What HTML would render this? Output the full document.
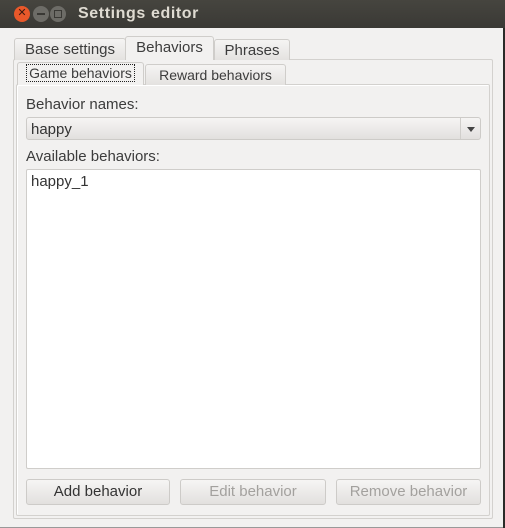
<!DOCTYPE html>
<html><head><style>
*{box-sizing:border-box;margin:0;padding:0}
body{width:505px;height:528px;background:#2b2b28;font-family:"Liberation Sans",sans-serif;font-size:15px;color:#3c3c3c;position:relative;overflow:hidden}
.a{position:absolute}
.title{left:0;top:0;width:505px;height:28px;background:linear-gradient(#46453f,#3a3935);color:#dfdbd2;font-weight:bold;font-size:16px;letter-spacing:0.6px}
.win{left:0;top:28px;width:503px;height:500px;background:#f2f1f0;border-bottom:1px solid #999}
.circ{width:16px;height:16px;border-radius:50%;top:6px}
.tab{border:1px solid #cfcdca;border-bottom:none;border-radius:3px 3px 0 0;background:linear-gradient(#f5f4f3,#e4e2e0);text-align:center;font-size:15px}
.sel{background:#f2f1f0}
.pane{border:1px solid #d3d1ce;border-radius:2px}
.btn{border:1px solid #cdcbc8;border-radius:3px;background:linear-gradient(#f6f5f4,#e2e0de);text-align:center;line-height:23px;font-size:15px}
</style></head><body>
<div class="a title"><span class="a" style="left:78px;top:5px">Settings editor</span></div>
<div class="a circ" style="left:14px;background:#e9582a;color:#3a1a10;font-size:11px;text-align:center;line-height:15px">✕</div>
<div class="a circ" style="left:33px;background:#6d6c67"><div class="a" style="left:4px;top:7px;width:8px;height:2px;background:#3a3935"></div></div>
<div class="a circ" style="left:50px;background:#6d6c67"><div class="a" style="left:4px;top:4px;width:8px;height:8px;border:1.5px solid #3a3935"></div></div>
<div class="a win"></div>
<div class="a pane" style="left:13px;top:59px;width:480px;height:460px"></div>
<div class="a tab" style="left:14px;top:38px;width:112px;height:22px;line-height:22px">Base settings</div>
<div class="a tab" style="left:214px;top:39px;width:76px;height:21px;line-height:21px">Phrases</div>
<div class="a tab sel" style="left:125px;top:36px;width:89px;height:24px;line-height:22px">Behaviors</div>
<div class="a pane" style="left:16px;top:84px;width:474px;height:432px;box-shadow:inset 1px 1px 0 #fff"></div>
<div class="a tab" style="left:145px;top:64px;width:141px;height:21px;line-height:21px;font-size:14px">Reward behaviors</div>
<div class="a tab sel" style="left:17px;top:62px;width:127px;height:23px;line-height:21px;font-size:14px"><span style="border:1px dotted #222;padding:0 2px">Game behaviors</span></div>
<div class="a" style="left:26px;top:96px">Behavior names:</div>
<div class="a btn" style="left:26px;top:117px;width:455px;height:23px;text-align:left;padding-left:4px;color:#333">happy
<div class="a" style="left:433px;top:0;width:1px;height:21px;background:#d0cecb"></div>
<div class="a" style="left:440px;top:9px;width:0;height:0;border-left:4px solid transparent;border-right:4px solid transparent;border-top:5px solid #444"></div></div>
<div class="a" style="left:26px;top:148px">Available behaviors:</div>
<div class="a" style="left:26px;top:169px;width:455px;height:300px;background:#fff;border:1px solid #cfcdca;border-radius:2px"><span class="a" style="left:4px;top:3px;color:#333">happy_1</span></div>
<div class="a btn" style="left:26px;top:479px;width:144px;height:26px;line-height:24px;color:#333">Add behavior</div>
<div class="a btn" style="left:180px;top:479px;width:146px;height:26px;line-height:24px;color:#a3a19e">Edit behavior</div>
<div class="a btn" style="left:336px;top:479px;width:145px;height:26px;line-height:24px;color:#a3a19e">Remove behavior</div>
</body></html>
